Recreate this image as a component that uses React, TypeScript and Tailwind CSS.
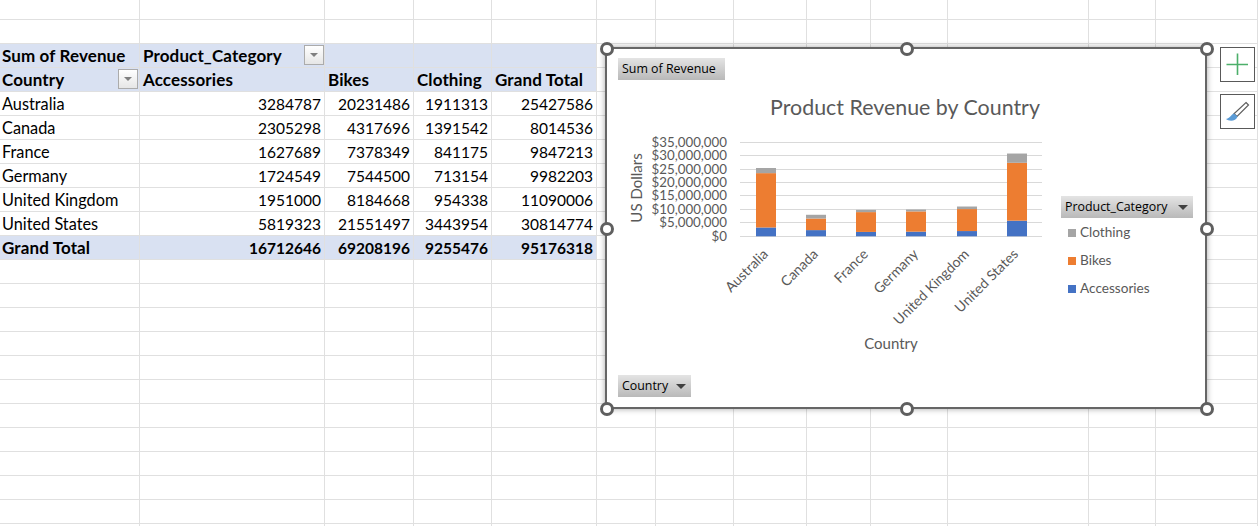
import React from "react";

const fontCell = "font-['Lato',sans-serif]";
const countries: [string, number, number, number, number][] = [
  ["Australia", 3284787, 20231486, 1911313, 25427586],
  ["Canada", 2305298, 4317696, 1391542, 8014536],
  ["France", 1627689, 7378349, 841175, 9847213],
  ["Germany", 1724549, 7544500, 713154, 9982203],
  ["United Kingdom", 1951000, 8184668, 954338, 11090006],
  ["United States", 5819323, 21551497, 3443954, 30814774],
];
const totals = [16712646, 69208196, 9255476, 95176318];

const TOTAL_ROWS = 23;
const COLS = 13;

function FilterBtn({ className }: { className: string }) {
  return (
    <span className={"absolute w-[20px] h-[20px] border border-[#ababab] bg-gradient-to-b from-white to-[#e6e6e6] flex items-center justify-center " + className}>
      <span className="w-0 h-0 border-l-[4px] border-r-[4px] border-t-[4px] border-l-transparent border-r-transparent border-t-[#7f7f7f]" />
    </span>
  );
}

const boldLabel = "text-[17px] tracking-[0.12px]";
const plainLabel = "text-[16.3px]";

function Sheet() {
  const cells: React.ReactNode[] = [];
  for (let r = 0; r < TOTAL_ROWS; r++) {
    for (let c = 0; c < COLS; c++) {
      const inTable = c < 5;
      let cls = "relative border-r border-b border-r-[#e0e0e0] border-b-[#e0e0e0] overflow-visible whitespace-nowrap";
      let content: React.ReactNode = null;
      if (inTable && r === 1) cls += " border-b-[#d9e1f2]";
      if (inTable && (r === 2 || r === 3 || r === 10)) {
        cls += " bg-[#d9e1f2] font-bold border-r-[#d9e1f2]";
        cls += r === 3 ? " border-b-[#8ea9db]" : " border-b-[#d9e1f2]";
      }
      if (inTable && r === 9) cls += " border-b-[#8ea9db]";
      if (inTable && r === 2) {
        if (c === 0) content = <span className={"pl-[2px] " + boldLabel}>Sum of Revenue</span>;
        if (c === 1) content = <><span className={"pl-[3px] " + boldLabel}>Product_Category</span><FilterBtn className="left-[164px] top-[1px]" /></>;
      }
      if (inTable && r === 3) {
        const t = ["Country", "Accessories", "Bikes", "Clothing", "Grand Total"][c];
        content = <span className={(c === 0 ? "pl-[2px] " : "pl-[3px] ") + boldLabel}>{t}</span>;
        if (c === 0) content = <>{content}<FilterBtn className="left-[118px] top-[1px]" /></>;
      }
      if (inTable && r >= 4 && r <= 9) {
        const row = countries[r - 4];
        if (c === 0) content = <span className={"pl-[2px] " + plainLabel}>{row[0]}</span>;
        else { content = row[c]; cls += " text-right pr-[3px]"; }
      }
      if (inTable && r === 10) {
        if (c === 0) content = <span className={"pl-[2px] " + boldLabel}>Grand Total</span>;
        else { content = totals[c - 1]; cls += " text-right pr-[3px]"; }
      }
      cells.push(<div key={r + "-" + c} className={cls}>{content}</div>);
    }
  }
  return (
    <div className={"grid grid-cols-[140px_185px_89px_78px_105px_59px_78px_73px_64px_77px_141px_67px_1fr] grid-rows-[20px_repeat(22,24px)] text-[15.5px] leading-[24px] text-black " + fontCell}>
      {cells}
    </div>
  );
}

const PLOT_BOTTOM = 236.3;
const SCALE = 94 / 35000000;
const barX = [756, 806, 856, 906, 957, 1007];
const labelEnd = [769, 819, 869, 919, 970, 1019];
const ticks = ["$35,000,000", "$30,000,000", "$25,000,000", "$20,000,000", "$15,000,000", "$10,000,000", "$5,000,000", "$0"];
const tickY = [142.5, 155.5, 169.5, 182.5, 195.5, 209.5, 222.5, 236.5];

function ChartSvg() {
  return (
    <svg viewBox="607 49 598 358" width={598} height={358} className={"block " + fontCell} fill="#595959">
      <text x={905} y={115} textAnchor="middle" fontSize={21.4}>Product Revenue by Country</text>
      {tickY.map((y) => (
        <line key={y} x1={740} x2={1042} y1={y} y2={y} stroke="#d9d9d9" strokeWidth={1} />
      ))}
      {ticks.map((t, i) => (
        <text key={t} x={727} y={tickY[i] + 4} textAnchor="end" fontSize={13.3}>{t}</text>
      ))}
      {countries.map((c, i) => {
        const a = c[1] * SCALE, b = c[2] * SCALE, g = c[3] * SCALE;
        return (
          <g key={c[0]}>
            <rect x={barX[i]} width={20} y={PLOT_BOTTOM - a} height={a} fill="#4472c4" />
            <rect x={barX[i]} width={20} y={PLOT_BOTTOM - a - b} height={b} fill="#ed7d31" />
            <rect x={barX[i]} width={20} y={PLOT_BOTTOM - a - b - g} height={g} fill="#a5a5a5" />
            <text transform={`translate(${labelEnd[i]} 255) rotate(-45)`} textAnchor="end" fontSize={14}>{c[0]}</text>
          </g>
        );
      })}
      <text transform="translate(642 188) rotate(-90)" textAnchor="middle" fontSize={15}>US Dollars</text>
      <text x={891} y={349} textAnchor="middle" fontSize={15}>Country</text>
      {[["Clothing", "#a5a5a5", 229], ["Bikes", "#ed7d31", 257], ["Accessories", "#4472c4", 285]].map(([t, col, y]) => (
        <g key={t as string}>
          <rect x={1068} y={y as number} width={8} height={8} fill={col as string} />
          <text x={1080} y={(y as number) + 8} fontSize={13.6}>{t}</text>
        </g>
      ))}
    </svg>
  );
}

function FieldBtn({ label, className, arrow }: { label: string; className: string; arrow?: boolean }) {
  return (
    <div className={"h-[22px] flex items-center justify-between pl-[4px] pr-[5px] bg-gradient-to-b from-[#e4e4e4] to-[#b9b9b9] text-[12.4px] text-black font-['Open_Sans',sans-serif] " + className}>
      <span className="pt-[1px]">{label}</span>
      {arrow && <span className="w-0 h-0 border-l-[5px] border-r-[5px] border-t-[5px] border-l-transparent border-r-transparent border-t-[#404040]" />}
    </div>
  );
}

const Handle = () => (
  <span className="w-[14px] h-[14px] rounded-full bg-white border-[3px] border-[#5f5f5f]" />
);

export default function App() {
  return (
    <div className="relative w-[1258px] h-[526px] overflow-hidden bg-white">
      <Sheet />
      <div className="absolute left-[605px] top-[47px] w-[602px] h-[362px] border-2 border-[#666666] bg-white shadow-[0_0_6px_rgba(0,0,0,0.35)]">
        <ChartSvg />
        <div className="absolute inset-0 flex flex-col pl-[11px] pr-[12px] pt-[9px]">
          <FieldBtn label="Sum of Revenue" className="self-start w-[107px]" />
          <FieldBtn label="Product_Category" arrow className="self-end w-[132px] mt-[116px]" />
          <FieldBtn label="Country" arrow className="self-start w-[73px] mt-[157px]" />
        </div>
        <div className="absolute -left-[7px] -right-[9px] -top-[7px] -bottom-[9px] flex flex-col justify-between">
          <div className="flex justify-between"><Handle /><Handle /><Handle /></div>
          <div className="flex justify-between"><Handle /><Handle /></div>
          <div className="flex justify-between"><Handle /><Handle /><Handle /></div>
        </div>
      </div>
      <div className="absolute left-[1220px] top-[47px] flex flex-col gap-[12px]">
        <div className="w-[35px] h-[35px] border border-[#595959] bg-white flex items-center justify-center">
          <svg width={33} height={33} viewBox="0 0 33 33">
            <path d="M16.5 5.5V27M5.5 16.5H27" stroke="#4caf6a" strokeWidth={1.6} fill="none" />
          </svg>
        </div>
        <div className="w-[35px] h-[35px] border border-[#595959] bg-white flex items-center justify-center">
          <svg width={33} height={33} viewBox="0 0 33 33">
            <path d="M25 7.5 L27.5 10 L16 21.5 L13 18.8 Z" fill="#fff" stroke="#5f5f5f" strokeWidth={1.2} />
            <path d="M13 18.5 C9.5 19.5 10 23 5 24 C8 26.5 15 26.5 16.5 21.5 Z" fill="#5b9bd5" />
          </svg>
        </div>
      </div>
    </div>
  );
}
